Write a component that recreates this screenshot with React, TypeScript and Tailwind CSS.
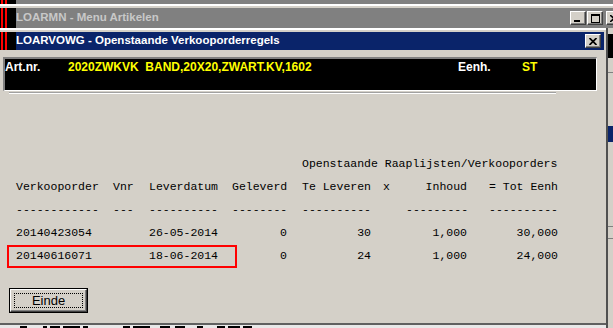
import React from 'react';

const Stripes = ({ h }: { h: string }) => (
  <div className={`flex w-[16px] shrink-0 bg-black pl-[1px] ${h}`}>
    <div className="w-[2px] bg-[#ff0000]" />
    <div className="w-[2px]" />
    <div className="w-[2px] bg-[#ff0000]" />
  </div>
);

const CaptionBtn = ({ children }: { children: React.ReactNode }) => (
  <div className="flex h-[14px] w-[16px] shrink-0 items-center justify-center border-t border-l border-t-white border-l-white border-r border-b border-r-[#404040] border-b-[#404040] bg-[#d4d0c8] shadow-[inset_-1px_-1px_0_#808080]">
    {children}
  </div>
);

const cellCls = [
  'w-[97px]',
  'w-[36px]',
  'w-[83px]',
  'w-[70px] text-right pr-[15px]',
  'w-[81px] text-right pr-[12px]',
  'w-[23px]',
  'w-[82px] text-right pr-[21px]',
  'w-[70px] text-right',
];

const rows = [
  ['Verkooporder', 'Vnr', 'Leverdatum', 'Geleverd', 'Te Leveren', 'x', 'Inhoud', '= Tot Eenh'],
  ['------------', '---', '----------', '--------', '----------', '', '---------', '----------'],
  ['20140423054', '', '26-05-2014', '0', '30', '', '1,000', '30,000'],
];

const lastRow = ['20140616071', '', '18-06-2014', '0', '24', '', '1,000', '24,000'];

// tops of the text of the window underneath, cut off by the bottom edge: [gap, width]
const specks = [
  [20, 7], [16, 4], [3, 10], [3, 17], [3, 5], [35, 7], [3, 17], [10, 10], [5, 10], [12, 6], [14, 8], [3, 12], [3, 9],
];

const Row = ({ cells }: { cells: string[] }) => (
  <div className="flex h-[23px] items-center whitespace-pre">
    {cells.map((c, i) => (
      <div key={i} className={`shrink-0 ${cellCls[i]}`}>{c}</div>
    ))}
  </div>
);

export default function App() {
  return (
    <div className="flex h-[328px] w-[613px] flex-col overflow-hidden bg-[#d4d0c8] font-['Liberation_Sans',Arial,sans-serif]">
      {/* window behind, top remnants */}
      <div className="flex h-[4px] shrink-0">
        <Stripes h="h-[4px]" />
        <div className="flex-1 bg-[#808080]" />
      </div>
      <div className="h-[2px] shrink-0 bg-white" />
      <div className="h-[2px] shrink-0 bg-[#d4d0c8]" />

      {/* LOARMN title bar */}
      <div className="flex h-[20px] shrink-0 items-center bg-[#808080]">
        <Stripes h="h-[20px]" />
        <div className="flex-1 text-[11.5px] font-bold leading-none text-[#c8c8c8]">LOARMN - Menu Artikelen</div>
        <div className="flex gap-[1px]">
          <CaptionBtn>
            <svg width="8" height="8" viewBox="0 0 8 8"><rect x="0" y="6" width="6" height="2" fill="#000" /></svg>
          </CaptionBtn>
          <CaptionBtn>
            <svg width="9" height="9" viewBox="0 0 9 9">
              <rect x="0.5" y="0.5" width="8" height="8" fill="none" stroke="#000" />
              <rect x="0" y="0" width="9" height="2" fill="#000" />
            </svg>
          </CaptionBtn>
          <div className="ml-[2px] w-[7px] overflow-hidden">
            <CaptionBtn>
              <svg width="8" height="7" viewBox="0 0 8 7"><path d="M0 0 L8 7 M8 0 L0 7" stroke="#000" strokeWidth="1.6" /></svg>
            </CaptionBtn>
          </div>
        </div>
      </div>

      <div className="flex min-h-0 flex-1">
        {/* LOARVOWG window */}
        <div className="flex w-[608px] shrink-0 flex-col border-r-2 border-r-[#505050]">
          <div className="h-[2px] shrink-0 bg-white" />
          <div className="h-[2px] shrink-0 bg-[#d4d0c8]" />
          <div className="flex h-[18px] shrink-0 items-center">
            <div className="flex h-full w-[604px] items-center bg-[#0a246a]">
              <Stripes h="h-[18px]" />
              <div className="flex-1 text-[11.5px] font-bold leading-none text-white">LOARVOWG - Openstaande Verkooporderregels</div>
              <div className="mr-[3px]">
                <CaptionBtn>
                  <svg width="8" height="7" viewBox="0 0 8 7"><path d="M0.5 0 L7.5 7 M7.5 0 L0.5 7" stroke="#000" strokeWidth="1.7" /></svg>
                </CaptionBtn>
              </div>
            </div>
          </div>

          <div className="flex flex-1 flex-col border-b-2 border-b-[#606060]">
            {/* item panel */}
            <div className="ml-[3px] mt-[7px] h-[34px] w-[594px] border-t-2 border-l-2 border-t-[#808080] border-l-[#808080] border-b border-r border-b-white border-r-white bg-black text-[12px] font-bold leading-[16px]">
              <div className="flex whitespace-pre">
                <span className="w-[63px] text-white">Art.nr.</span>
                <span className="w-[390px] text-[#ffff00]">2020ZWKVK  BAND,20X20,ZWART.KV,1602</span>
                <span className="w-[64px] text-white">Eenh.</span>
                <span className="text-[#ffff00]">ST</span>
              </div>
            </div>
            <div className="ml-[9px] mt-[1px] h-[1px] w-[547px] bg-[#a0a0a0]" />
            <div className="ml-[9px] h-[1px] w-[547px] bg-white" />

            {/* table */}
            <div className="mt-[58px] pl-[16px] font-['Liberation_Mono','Courier_New',monospace] text-[11.5px] text-black">
              <div className="flex h-[23px] items-center whitespace-pre pl-[286px]">Openstaande Raaplijsten/Verkooporders</div>
              {rows.map((r, i) => (
                <Row key={i} cells={r} />
              ))}
              <div className="relative">
                <Row cells={lastRow} />
                <div className="absolute left-[-9px] top-[1px] h-[23px] w-[230px] border-2 border-[#ff0000]" />
              </div>
            </div>

            {/* Einde button */}
            <div className="ml-[9px] mt-[21px] h-[25px] w-[79px] border border-black">
              <div className="h-full w-full border-t border-l border-t-white border-l-white border-r border-b border-r-[#404040] border-b-[#404040] p-[3px] shadow-[inset_-1px_-1px_0_#808080]">
                <div className="flex h-full w-full items-center justify-center border border-dotted border-black text-[13px] leading-none text-black">
                  Einde
                </div>
              </div>
            </div>
          </div>
          <div className="flex h-[3px] shrink-0 items-end bg-[#e8e8e8]">
            {specks.map(([gap, w], i) => (
              <div key={i} className="h-[2px] bg-black" style={{ marginLeft: gap, width: w }} />
            ))}
          </div>
        </div>

        {/* right strip of window behind */}
        <div className="flex w-[5px] shrink-0 flex-col">
          <div className="h-[6px] bg-[#d4d0c8]" />
          <div className="h-[24px] bg-black" />
          <div className="h-[14px] bg-[#d4d0c8]" />
          <div className="h-[1px] bg-[#808080]" />
          <div className="h-[53px] bg-[#d4d0c8]" />
          <div className="h-[16px] bg-[#0a246a]" />
          <div className="h-[84px] bg-[#d4d0c8]" />
          <div className="h-[1px] bg-[#808080]" />
          <div className="h-[11px] bg-[#d4d0c8]" />
          <div className="h-[1px] bg-[#808080]" />
          <div className="flex-1 bg-[#d4d0c8]" />
        </div>
      </div>
    </div>
  );
}
